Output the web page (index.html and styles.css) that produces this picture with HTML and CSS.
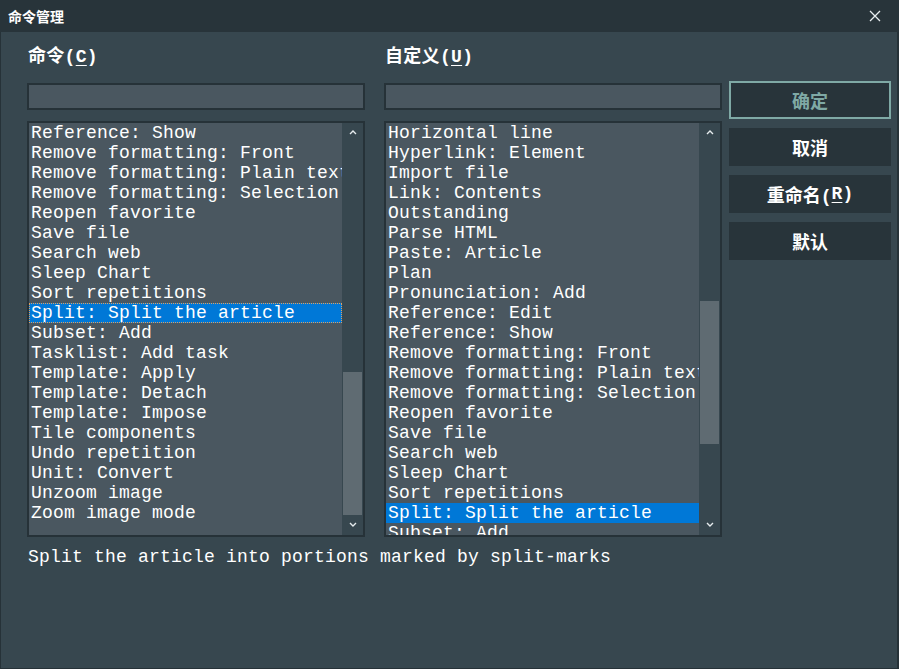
FILE: index.html
```html
<!DOCTYPE html>
<html lang="zh">
<head>
<meta charset="utf-8">
<title>命令管理</title>
<link rel="stylesheet" href="styles.css">
</head>
<body>
<div class="window">
  <div class="titlebar">
    <span class="title">命令管理</span>
    <span class="close">
      <svg width="12" height="12" viewBox="0 0 12 12"><path d="M1 1L11 11M11 1L1 11" stroke="#e8eef0" stroke-width="1.3" fill="none"/></svg>
    </span>
  </div>
  <div class="content">
    <div class="main">
      <div class="col">
        <div class="label">命令(<u>C</u>)</div>
        <div class="input"></div>
        <div class="list">
          <div class="items">
            <div class="item">Reference: Show</div>
            <div class="item">Remove formatting: Front</div>
            <div class="item">Remove formatting: Plain text</div>
            <div class="item">Remove formatting: Selection</div>
            <div class="item">Reopen favorite</div>
            <div class="item">Save file</div>
            <div class="item">Search web</div>
            <div class="item">Sleep Chart</div>
            <div class="item">Sort repetitions</div>
            <div class="item selected focus">Split: Split the article</div>
            <div class="item">Subset: Add</div>
            <div class="item">Tasklist: Add task</div>
            <div class="item">Template: Apply</div>
            <div class="item">Template: Detach</div>
            <div class="item">Template: Impose</div>
            <div class="item">Tile components</div>
            <div class="item">Undo repetition</div>
            <div class="item">Unit: Convert</div>
            <div class="item">Unzoom image</div>
            <div class="item">Zoom image mode</div>
          </div>
          <div class="scrollbar">
            <svg class="arrow up" width="8" height="5" viewBox="0 0 8 5"><path d="M1 4L4 1L7 4" stroke="#e6ecee" stroke-width="1.4" fill="none"/></svg>
            <div class="thumb thumb1"></div>
            <svg class="arrow down" width="8" height="5" viewBox="0 0 8 5"><path d="M1 1L4 4L7 1" stroke="#e6ecee" stroke-width="1.4" fill="none"/></svg>
          </div>
        </div>
      </div>
      <div class="col">
        <div class="label">自定义(<u>U</u>)</div>
        <div class="input"></div>
        <div class="list">
          <div class="items">
            <div class="item">Horizontal line</div>
            <div class="item">Hyperlink: Element</div>
            <div class="item">Import file</div>
            <div class="item">Link: Contents</div>
            <div class="item">Outstanding</div>
            <div class="item">Parse HTML</div>
            <div class="item">Paste: Article</div>
            <div class="item">Plan</div>
            <div class="item">Pronunciation: Add</div>
            <div class="item">Reference: Edit</div>
            <div class="item">Reference: Show</div>
            <div class="item">Remove formatting: Front</div>
            <div class="item">Remove formatting: Plain text</div>
            <div class="item">Remove formatting: Selection</div>
            <div class="item">Reopen favorite</div>
            <div class="item">Save file</div>
            <div class="item">Search web</div>
            <div class="item">Sleep Chart</div>
            <div class="item">Sort repetitions</div>
            <div class="item selected">Split: Split the article</div>
            <div class="item">Subset: Add</div>
          </div>
          <div class="scrollbar">
            <svg class="arrow up" width="8" height="5" viewBox="0 0 8 5"><path d="M1 4L4 1L7 4" stroke="#e6ecee" stroke-width="1.4" fill="none"/></svg>
            <div class="thumb thumb2"></div>
            <svg class="arrow down" width="8" height="5" viewBox="0 0 8 5"><path d="M1 1L4 4L7 1" stroke="#e6ecee" stroke-width="1.4" fill="none"/></svg>
          </div>
        </div>
      </div>
      <div class="buttons">
        <div class="btn default">确定</div>
        <div class="btn">取消</div>
        <div class="btn">重命名(<u>R</u>)</div>
        <div class="btn">默认</div>
      </div>
    </div>
    <div class="status">Split the article into portions marked by split-marks</div>
  </div>
</div>
</body>
</html>
```
FILE: styles.css
```css
* { box-sizing: border-box; }
html, body {
  margin: 0;
  padding: 0;
  width: 899px;
  height: 669px;
  overflow: hidden;
  background: #37474f;
}
.window {
  width: 899px;
  height: 669px;
  display: flex;
  flex-direction: column;
  font-family: "Liberation Mono", "Noto Sans CJK SC", monospace;
  color: #ffffff;
}
.titlebar {
  height: 32px;
  flex: none;
  background: #28343a;
  display: flex;
  align-items: center;
  justify-content: space-between;
  padding: 0 18px 0 8px;
}
.title {
  font-family: "Noto Sans CJK SC", sans-serif;
  font-size: 14px;
  font-weight: bold;
  color: #ffffff;
}
.close { display: flex; align-items: center; }
.content {
  flex: 1;
  background: #37474f;
  border: 1px solid #263238;
  border-top: none;
  border-right-width: 2px;
  padding: 12px 0 0 26px;
  display: flex;
  flex-direction: column;
}
.main {
  display: flex;
  align-items: flex-start;
  gap: 19px;
}
.col {
  width: 338px;
  flex: none;
  display: flex;
  flex-direction: column;
}
.label {
  height: 26px;
  font-size: 18px;
  font-weight: bold;
  line-height: 26px;
  padding-left: 1px;
  margin-bottom: 13px;
  letter-spacing: 0.3px;
}
.label u, .btn u { text-decoration-thickness: 1px; text-underline-offset: 3px; }
.input {
  height: 27px;
  background: #4a5760;
  border: 2px solid #263238;
  margin-bottom: 11px;
}
.list {
  height: 416px;
  background: #4a5760;
  border: 2px solid #263238;
  display: flex;
  overflow: hidden;
}
.items {
  flex: 1;
  overflow: hidden;
  min-width: 0;
}
.item {
  height: 20px;
  line-height: 21px;
  font-size: 18px;
  letter-spacing: 0.2px;
  padding-left: 2px;
  white-space: nowrap;
  overflow: hidden;
  color: #ffffff;
}
.item.selected { background: #0078d7; }
.item.focus { outline: 1px dotted #e0a060; outline-offset: -1px; }
.scrollbar {
  width: 21px;
  flex: none;
  background: #37474f;
  position: relative;
}
.arrow { position: absolute; left: 7px; }
.arrow.up { top: 7px; }
.arrow.down { bottom: 8px; }
.thumb {
  position: absolute;
  left: 1px;
  width: 19px;
  background: #5f6b72;
}
.thumb1 { top: 249px; height: 143px; }
.thumb2 { top: 178px; height: 143px; }
.buttons {
  flex: none;
  margin-left: -12px;
  padding-top: 37px;
  width: 162px;
  display: flex;
  flex-direction: column;
  gap: 9px;
}
.btn {
  height: 38px;
  flex: none;
  background: #28343a;
  display: flex;
  align-items: center;
  justify-content: center;
  font-size: 18px;
  font-weight: bold;
  color: #ffffff;
}
.btn.default {
  border: 2px solid #7fa9a5;
  color: #7fa9a5;
}
.status {
  margin-top: 9px;
  font-size: 18px;
  letter-spacing: 0.2px;
  line-height: 22px;
  padding-left: 1px;
}
```
